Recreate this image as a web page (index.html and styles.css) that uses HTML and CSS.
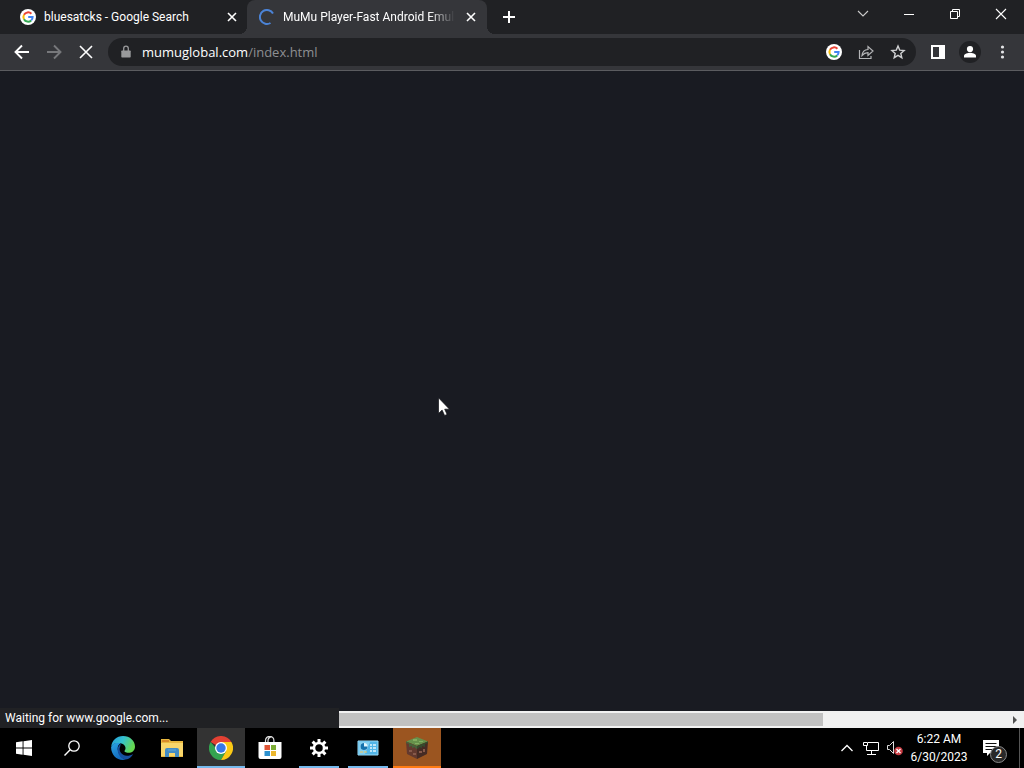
FILE: index.html
```html
<!DOCTYPE html>
<html lang="en">
<head>
<meta charset="utf-8">
<title>MuMu Player-Fast Android Emulator</title>
<link rel="stylesheet" href="styles.css">
</head>
<body>
<svg class="defs" aria-hidden="true">
  <symbol id="google" viewBox="0 0 16 16">
    <circle cx="8" cy="8" r="8" fill="#fff"/>
    <g fill="none" stroke-width="2">
      <path d="M11.4 4.8A4.6 4.6 0 0 0 4 5.8" stroke="#ea4335"/>
      <path d="M4 5.8a4.6 4.6 0 0 0 0 4.4" stroke="#fbbc05"/>
      <path d="M4 10.2a4.6 4.6 0 0 0 7.2 1.2" stroke="#34a853"/>
      <path d="M11.2 11.4A4.6 4.6 0 0 0 12.6 8H8.2" stroke="#4285f4"/>
    </g>
  </symbol>
  <symbol id="cross" viewBox="0 0 16 16"><path d="M4 4l8 8M12 4l-8 8" fill="none" stroke="#fff" stroke-width="1.6"/></symbol>
</svg>

<header class="tabstrip">
  <div class="tab">
    <svg class="icon16"><use href="#google"/></svg>
    <span class="tab-title">bluesatcks - Google Search</span>
    <button class="tab-close" aria-label="Close tab"><svg class="icon16"><use href="#cross"/></svg></button>
  </div>
  <div class="tab tab-active">
    <svg class="icon16" viewBox="0 0 16 16"><path d="M11.5 14A7 7 0 1 1 14 4.5" fill="none" stroke="#4b83d6" stroke-width="2"/></svg>
    <span class="tab-title tab-fade">MuMu Player-Fast Android Emula</span>
    <button class="tab-close" aria-label="Close tab"><svg class="icon16"><use href="#cross"/></svg></button>
  </div>
  <button class="new-tab" aria-label="New tab"><svg class="icon16" viewBox="0 0 16 16"><path d="M8 2v12M2 8h12" stroke="#fff" stroke-width="2"/></svg></button>
  <div class="window-controls">
    <button aria-label="Search tabs"><svg class="icon16" viewBox="0 0 16 16"><path d="M3 5l5 5 5-5" fill="none" stroke="#ccc" stroke-width="1.1"/></svg></button>
    <button aria-label="Minimize"><svg class="icon16" viewBox="0 0 16 16"><path d="M3 8.5h10" stroke="#fff"/></svg></button>
    <button aria-label="Restore"><svg class="icon16" viewBox="0 0 16 16"><path d="M3.500 5.500h7v7h-7zM5.500 5.500v-2h7v7h-2" fill="none" stroke="#fff"/></svg></button>
    <button aria-label="Close"><svg class="icon16" viewBox="0 0 16 16"><path d="M3 3l10 10M13 3L3 13" stroke="#fff" stroke-width="1.1"/></svg></button>
  </div>
</header>

<nav class="toolbar">
  <button class="tool" aria-label="Back"><svg class="icon16" viewBox="0 0 16 16"><path d="M15 8H2.500M8 1.500L1.500 8 8 14.500" fill="none" stroke="#fff" stroke-width="1.9"/></svg></button>
  <button class="tool" aria-label="Forward"><svg class="icon16" viewBox="0 0 16 16"><path d="M1 8h12.500M8 1.500L14.500 8 8 14.500" fill="none" stroke="#77787b" stroke-width="1.9"/></svg></button>
  <button class="tool" aria-label="Stop"><svg class="icon16" viewBox="0 0 16 16"><path d="M2 2l12 12M14 2L2 14" stroke="#fff" stroke-width="1.6"/></svg></button>
  <div class="omnibox">
    <button class="lock" aria-label="Site information"><svg class="icon16" viewBox="0 0 16 16"><path d="M4 6.500h8a.7.7 0 0 1 .7.7v5.600a.7.7 0 0 1-.7.7H4a.7.7 0 0 1-.7-.7V7.200a.7.7 0 0 1 .7-.7z" fill="#999a9c"/><path d="M5.700 7V4.500a2.300 2.300 0 0 1 4.600 0V7" fill="none" stroke="#999a9c" stroke-width="1.3"/></svg></button>
    <a class="url" href="#">mumuglobal.com<span>/index.html</span></a>
    <button class="tool" aria-label="Search with Google"><svg class="icon16"><use href="#google"/></svg></button>
    <button class="tool" aria-label="Share"><svg class="icon16" viewBox="0 0 16 16"><path d="M1.500 6v8.500h11.500V12M4 11.500c.4-4 2.500-5.800 6-6V2.500L15 7l-5 4.500V8.700c-2.600 0-4.300.8-6 2.800z" fill="none" stroke="#b4b5b7" stroke-width="1.2"/></svg></button>
    <button class="tool" aria-label="Bookmark"><svg class="icon16" viewBox="0 0 16 16"><path d="M8 2l1.700 4.100 4.400.4-3.300 2.900 1 4.300L8 11.400l-3.800 2.300 1-4.300-3.300-2.900 4.400-.4z" fill="none" stroke="#d0d1d3" stroke-width="1.4"/></svg></button>
  </div>
  <button class="tool" aria-label="Side panel"><svg class="icon16" viewBox="0 0 16 16"><path d="M1 1h14v14H1zM3 3v10h6V3z" fill="#fff" fill-rule="evenodd"/></svg></button>
  <button class="tool" aria-label="Profile"><svg class="icon22" viewBox="0 0 22 22"><circle cx="11" cy="11" r="11" fill="#202124"/><circle cx="11" cy="8" r="3.100" fill="#fff"/><path d="M5 16.500v-1.700c0-2 4-3 6-3s6 1 6 3v1.700z" fill="#fff"/></svg></button>
  <button class="tool" aria-label="Menu"><svg class="icon16" viewBox="0 0 16 16"><g fill="#e4e5e7"><circle cx="8.500" cy="3" r="1.600"/><circle cx="8.500" cy="8" r="1.600"/><circle cx="8.500" cy="13" r="1.600"/></g></svg></button>
</nav>

<main class="page">
  <svg class="cursor" viewBox="0 0 12 19"><path d="M.5.8v15.700l3.600-3.400 2.500 5.400 2.500-1.100-2.400-5.200h4.800z" fill="#fff" stroke="#101116" stroke-width=".7"/></svg>
  <div class="scrollbar">
    <div class="thumb"></div>
    <button aria-label="Scroll right"><svg class="arrow" viewBox="0 0 5 8"><path d="M0 0l4 4-4 4z" fill="#505050"/></svg></button>
  </div>
  <div class="status">Waiting for www.google.com...</div>
</main>

<footer class="taskbar">
  <button class="task" aria-label="Start"><svg class="icon16" viewBox="0 0 16 16"><path d="M0 2.200l6.600-.9v6.200H0zM7.500 1.200L16 0v7.500H7.500zM0 8.500h6.600v6.200L0 13.800zM7.500 8.500H16V16l-8.500-1.200z" fill="#fff"/></svg></button>
  <button class="task" aria-label="Search"><svg class="icon16" viewBox="0 0 16 16"><circle cx="10" cy="6" r="5.200" fill="none" stroke="#fff" stroke-width="1.300"/><path d="M6.200 9.800L.5 15.500" stroke="#fff" stroke-width="1.400"/></svg></button>
  <div class="apps">
    <button class="task" aria-label="Microsoft Edge"><svg class="icon24" viewBox="0 0 24 24">
      <defs><linearGradient id="e1" x1="0" y1="0" x2="1" y2=".4"><stop offset="0" stop-color="#2399dc"/><stop offset=".5" stop-color="#34c1cf"/><stop offset="1" stop-color="#65d850"/></linearGradient><linearGradient id="e2" x1="0" y1="0" x2=".5" y2="1"><stop offset="0" stop-color="#2ba5e5"/><stop offset="1" stop-color="#1268bd"/></linearGradient></defs>
      <path d="M.2 10.500C1 4.500 5.500 0 12 0c7 0 12 5 12 10.400 0 4-3 6.400-6.500 6.400-3 0-4.600-1.200-3.800-2.200 1.800-2 .8-5.700-3.300-7C6.700 6.400 2.400 7.500.2 10.500z" fill="url(#e1)"/>
      <path d="M.1 11C1.800 7.200 6 5.800 9.800 7.300c-2.500 1.200-3.500 3.700-3 6.700.8 4.700 4 8.300 7.900 9.600C7 25.500 0 19.500.1 11z" fill="url(#e2)"/>
      <path d="M9.200 10.500c-2 4 1.200 9.200 6.700 9.200 2.400 0 4.500-.6 6.300-1.800-1.500 3-4.200 5.200-7.500 5.700-5-.8-8-5.400-8-9.800 0-3 1.700-5.200 4-6.200-1 .7-1.300 1.800-1.500 2.900z" fill="#164f9e"/>
    </svg></button>
    <button class="task" aria-label="File Explorer"><svg class="icon22" viewBox="0 0 22 22"><path d="M0 2h8l2 2h12v16H0z" fill="#e9b83f"/><path d="M1 3h7v2H1z" fill="#d98b2b"/><path d="M0 6h22v13H0z" fill="#f9d66b"/><path d="M4 20v-7q0-2 2-2h10q2 0 2 2v7h-4v-4H8v4z" fill="#438cc5"/><path d="M7 13h8" stroke="#62a8d7"/></svg></button>
    <button class="task task-current" aria-label="Google Chrome"><svg class="icon24" viewBox="0 0 24 24"><path d="M12 12L1.600 6A12 12 0 0 1 22.400 6z" fill="#e34133"/><path d="M12 12h-5.200L1.600 6a12 12 0 0 0 10.400 18l5.200-9z" fill="#34a350"/><path d="M12 6h10.400A12 12 0 0 1 12 24l5.200-9z" fill="#fbc916"/><circle cx="12" cy="12" r="6" fill="#fff"/><circle cx="12" cy="12" r="4.700" fill="#3778e8"/></svg></button>
    <button class="task" aria-label="Microsoft Store"><svg class="icon24" viewBox="0 0 24 24"><path d="M7.500 7V4.500a4.200 4.200 0 0 1 8.400 0V7M10 7V4.500a3.500 3.500 0 0 1 3.500-3.500" fill="none" stroke="#ddd" stroke-width="1.200"/><path d="M.5 6h23v15q0 2-2 2h-19q-2 0-2-2z" fill="#fff"/><path d="M6.500 9H12v5H6.500z" fill="#df5536"/><path d="M13 9h5v5h-5z" fill="#7cad35"/><path d="M6.500 15H12v5H6.500z" fill="#2d91cf"/><path d="M13 15h5v5h-5z" fill="#ebb62d"/></svg></button>
    <button class="task task-open" aria-label="Settings"><svg class="icon18" viewBox="0 0 18 18"><circle cx="9" cy="9" r="5" fill="none" stroke="#fff" stroke-width="2.500"/><path d="M9 0v3.500M9 14.500V18M0 9h3.500M14.500 9H18M2.600 2.600l2.500 2.500M12.900 12.900l2.500 2.500M15.400 2.600l-2.500 2.500M5.100 12.900l-2.500 2.500" stroke="#fff" stroke-width="3"/></svg></button>
    <button class="task task-open" aria-label="Control Panel"><svg class="icon22" viewBox="0 0 22 22"><path d="M1 4h20v14H1z" fill="#51b5e8" stroke="#9adaf5"/><path d="M2 5h11l-5 12H2z" fill="#83cff0"/><circle cx="7" cy="9.500" r="3.500" fill="#e5f6fd"/><path d="M7 9.500V6a3.500 3.500 0 1 0 3.500 3.500z" fill="#1672ad"/><path d="M13 8h2m1 0h3m-6 3h2m1 0h3m-6 3h2m1 0h3" stroke="#dff6ff" stroke-width="1.500"/><path d="M3 15h3m1 0h3" stroke="#f1c65b"/></svg></button>
    <button class="task task-alert" aria-label="Minecraft"><svg class="icon24" viewBox="0 0 24 24"><path d="M12 1l11 4.500L12 10 1 5.500z" fill="#66914b"/><path d="M1 5.500L12 10v13L2 18z" fill="#63392e"/><path d="M23 5.500L12 10v13l10-5z" fill="#452b24"/><path d="M1 5.500L12 10v3l-2-1v-1l-3 1v-2l-3 1V8L1 7z" fill="#46603a"/><path d="M23 5.500L12 10v3l2-1v-1l3 1v-2l3 1V8l3-1z" fill="#354a2d"/><path d="M8 3h4v2H8zm6 2h4v1h-4zM10 7h4v1h-4z" fill="#83ad61"/><path d="M4 14h3v2H4zm4 3h3v2H8zm6-2h3v2h-3zm4-2h2v3h-2z" fill="#86594a"/></svg></button>
  </div>
  <div class="tray">
    <button class="tray-button" aria-label="Show hidden icons"><svg class="icon16" viewBox="0 0 16 16"><path d="M2.500 11L8 5.500l5.500 5.500" fill="none" stroke="#fff" stroke-width="1.300"/></svg></button>
    <button class="tray-button" aria-label="Network"><svg class="icon16" viewBox="0 0 16 16"><path d="M5 2.500h10.500v8H3.500V6M8.500 11v3M4 14.500h9M.5 2.500h4v3h-4z" fill="none" stroke="#fff"/></svg></button>
    <button class="tray-button" aria-label="Volume muted"><svg class="icon16" viewBox="0 0 16 16"><path d="M.5 5.500h2l4-4v12l-4-4h-2z" fill="none" stroke="#ddd"/><circle cx="11.500" cy="11" r="4.300" fill="#c83c43"/><path d="M9.500 9l4 4m0-4l-4 4" stroke="#fff" stroke-width="1.300"/></svg></button>
    <button class="clock"><time>6:22 AM</time><time>6/30/2023</time></button>
    <button class="notifications" aria-label="2 new notifications"><svg class="icon16" viewBox="0 0 16 16"><path d="M0 0h16v13H7l-3 3v-3H0z" fill="#fff"/><path d="M2.500 3.500h11M2.500 6.500h11M2.500 9.500h7" stroke="#111"/></svg><span class="badge">2</span></button>
    <button class="show-desktop" aria-label="Show desktop"></button>
  </div>
</footer>
</body>
</html>
```

FILE: styles.css
```css
* { box-sizing: border-box; }

body {
  margin: 0;
  height: 100vh;
  display: flex;
  flex-direction: column;
  overflow: hidden;
  background: #191b22;
  color: #fff;
  font: 12px/16px Roboto, "Open Sans", sans-serif;
}

button {
  display: flex;
  align-items: center;
  justify-content: center;
  flex: none;
  padding: 0;
  border: 0;
  background: none;
  color: inherit;
  font: inherit;
}

svg { display: block; flex: none; }
.defs { position: absolute; width: 0; height: 0; }
.icon16 { width: 16px; height: 16px; }
.icon18 { width: 18px; height: 18px; }
.icon22 { width: 22px; height: 22px; }
.icon24 { width: 24px; height: 24px; }

.tabstrip {
  display: flex;
  height: 34px;
  padding-left: 8px;
  background: #202124;
}
.tab {
  display: flex;
  align-items: center;
  gap: 8px;
  flex: 0 1 240px;
  min-width: 0;
  padding: 0 8px 0 12px;
}
.tab-active {
  position: relative;
  margin-left: -1px;
  background: #35363a;
  border-radius: 8px 8px 0 0;
}
.tab-active::before,
.tab-active::after {
  content: "";
  position: absolute;
  bottom: 0;
  width: 8px;
  height: 8px;
}
.tab-active::before { right: 100%; background: radial-gradient(circle at 0 0, transparent 8px, #35363a 8px); }
.tab-active::after { left: 100%; background: radial-gradient(circle at 100% 0, transparent 8px, #35363a 8px); }
.tab-title {
  flex: 1;
  min-width: 0;
  overflow: hidden;
  white-space: nowrap;
}
.tab-fade { mask-image: linear-gradient(to right, #000 85%, transparent); }
.tab-close { width: 16px; height: 16px; }
.new-tab { width: 28px; height: 34px; margin-left: 8px; }
.window-controls { display: flex; margin-left: auto; }
.window-controls button { width: 46px; height: 28px; }

.toolbar {
  display: flex;
  align-items: center;
  height: 37px;
  padding: 0 6px;
  background: #35363a;
  border-bottom: 1px solid #5b5c60;
}
.tool { width: 32px; height: 28px; }
.omnibox {
  display: flex;
  align-items: center;
  flex: 1;
  min-width: 0;
  height: 28px;
  margin: 0 6px;
  padding: 0 2px 0 10px;
  border-radius: 14px;
  background: #202124;
}
.lock { width: 16px; height: 28px; margin-right: 8px; }
.url {
  flex: 1;
  min-width: 0;
  overflow: hidden;
  white-space: nowrap;
  color: #fff;
  font-family: "Open Sans", "Noto Sans", sans-serif;
  font-size: 13px;
  line-height: 20px;
  text-decoration: none;
}
.url span { color: #8e8f92; }

.page {
  position: relative;
  display: flex;
  flex: 1;
  flex-direction: column;
  justify-content: flex-end;
}
.cursor {
  position: absolute;
  left: 438px;
  top: 326px;
  width: 12px;
  height: 19px;
}
.scrollbar {
  display: flex;
  align-items: center;
  justify-content: space-between;
  height: 17px;
  padding-left: 17px;
  background: #f1f1f1;
}
.thumb { width: 80%; height: 13px; background: #c1c1c1; }
.scrollbar button { width: 17px; height: 17px; }
.arrow { width: 5px; height: 8px; }
.status {
  position: absolute;
  left: 0;
  bottom: 0;
  width: 33.1%;
  height: 20px;
  padding: 2px 5px;
  background: #202124;
}

.taskbar {
  display: flex;
  height: 40px;
  background: #000;
}
.apps { display: flex; gap: 1px; margin-left: 3px; }
.task { position: relative; width: 48px; height: 40px; }
.task-current { background: #333; border-bottom: 2px solid #76b9ed; padding-top: 2px; }
.task-open::after {
  content: "";
  position: absolute;
  left: 4px;
  right: 4px;
  bottom: 0;
  height: 2px;
  background: #76b9ed;
}
.task-alert { background: #9b5520; border-bottom: 2px solid #ff7b12; padding-top: 2px; }
.tray { display: flex; margin-left: auto; }
.tray-button { width: 24px; height: 40px; }
.clock {
  flex-direction: column;
  width: 64px;
  height: 40px;
  line-height: 18px;
}
.notifications { position: relative; width: 48px; height: 40px; padding-right: 8px; }
.badge {
  position: absolute;
  left: 19px;
  top: 18px;
  width: 17px;
  height: 17px;
  border: 1px solid #888;
  border-radius: 50%;
  background: #292929;
  line-height: 15px;
}
.show-desktop { width: 5px; height: 40px; border-left: 1px solid #555; }
```
